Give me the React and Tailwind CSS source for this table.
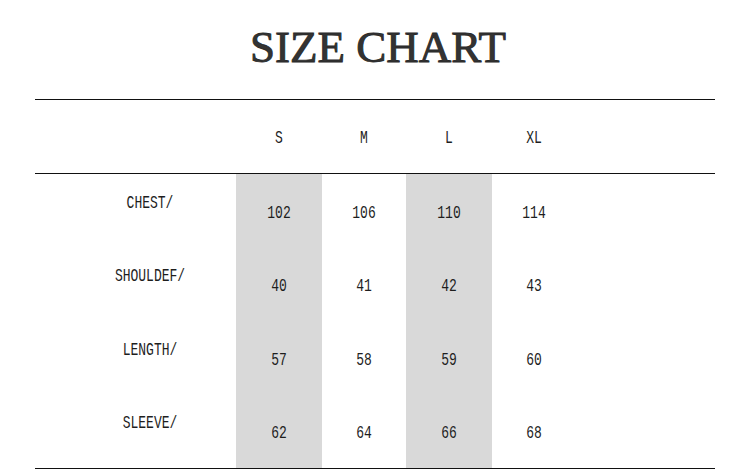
import React from "react";

const sizes = ["S", "M", "L", "XL"];
const widths = ["w-[86px]", "w-[84px]", "w-[86px]", "w-[84px]"];
const rows = [
  { label: "CHEST/", values: ["102", "106", "110", "114"] },
  { label: "SHOULDEF/", values: ["40", "41", "42", "43"] },
  { label: "LENGTH/", values: ["57", "58", "59", "60"] },
  { label: "SLEEVE/", values: ["62", "64", "66", "68"] },
];

function T({ children }) {
  return (
    <span className="inline-block scale-y-[1.4] font-['Liberation_Mono',monospace] text-[13px] leading-none text-[#1e1e1e]">
      {children}
    </span>
  );
}

export default function App() {
  return (
    <div className="w-[750px] h-[474px] bg-white overflow-hidden">
      <div className="pt-[25px] h-[99px] flex justify-center">
        <h1 className="pl-[6px] font-['Liberation_Serif',serif] text-[45px] leading-none text-[#333] [-webkit-text-stroke:0.9px_#2a2a2a]">
          SIZE CHART
        </h1>
      </div>
      <div className="ml-[35px] w-[680px]">
        <div className="h-px bg-[#111]" />
        <div className="flex h-[73px]">
          <div className="w-[201px]" />
          {sizes.map((s, i) => (
            <div key={s} className={`${widths[i]} flex items-center justify-center pt-[3px]`}>
              <T>{s}</T>
            </div>
          ))}
        </div>
        <div className="h-px bg-[#111]" />
        <div className="flex h-[294px]">
          <div className="w-[201px] flex flex-col pl-[29px]">
            {rows.map((r) => (
              <div key={r.label} className="flex-1 flex items-center justify-center pb-[15px]">
                <T>{r.label}</T>
              </div>
            ))}
          </div>
          {sizes.map((s, i) => (
            <div
              key={s}
              className={`${widths[i]} flex flex-col ${i % 2 === 0 ? "bg-[#d9d9d9]" : ""}`}
            >
              {rows.map((r) => (
                <div key={r.label} className="flex-1 flex items-center justify-center pt-[5px]">
                  <T>{r.values[i]}</T>
                </div>
              ))}
            </div>
          ))}
        </div>
        <div className="h-px bg-[#111]" />
      </div>
    </div>
  );
}
